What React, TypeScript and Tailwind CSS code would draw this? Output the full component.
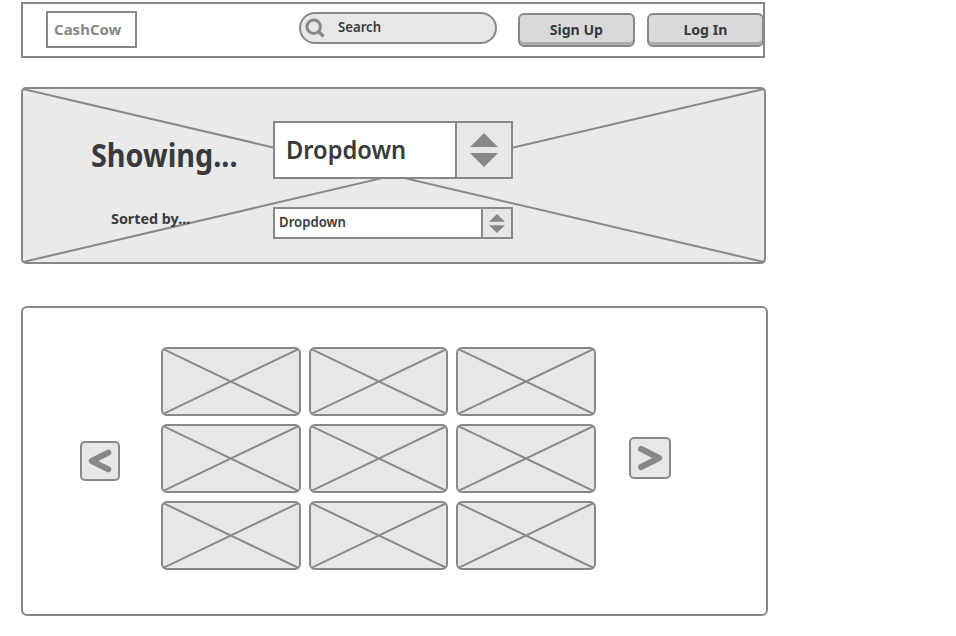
import React from "react";

function Cross() {
  return (
    <svg
      className="absolute inset-0 h-full w-full"
      preserveAspectRatio="none"
      viewBox="0 0 100 100"
      stroke="#888888"
      strokeWidth="2"
      aria-hidden="true"
    >
      <path d="M0 0L100 100M0 100L100 0" vectorEffect="non-scaling-stroke" />
    </svg>
  );
}

function Tile() {
  return (
    <div className="relative h-[69px] rounded-[6px] border-2 border-[#888888] bg-[#e7e7e7]">
      <Cross />
    </div>
  );
}

function HeaderButton({ children }: { children: React.ReactNode }) {
  return (
    <button className="h-[34px] w-[117px] shrink-0 rounded-[6px] border-2 border-[#888888] bg-[#d9d9d9] pr-px pb-[2px] text-[15px] leading-[28px] font-bold text-[#3a3a3a] shadow-[inset_0_-3px_0_#adadad]">
      <span className="inline-block scale-x-[0.94]">{children}</span>
    </button>
  );
}

function Arrows({ className }: { className: string }) {
  return (
    <svg className={className} viewBox="0 0 28 34" preserveAspectRatio="none" fill="#888888" aria-hidden="true">
      <path d="M14 0L28 14H0ZM14 34L0 20H28Z" />
    </svg>
  );
}

function PageButton({ direction }: { direction: "previous" | "next" }) {
  const previous = direction === "previous";
  return (
    <button
      aria-label={direction}
      className={
        previous
          ? "ml-[57px] mt-[133px] size-10 rounded-[5px] border-2 border-[#888888] bg-[#e7e7e7]"
          : "ml-[33px] mt-[129px] size-[42px] rounded-[5px] border-2 border-[#888888] bg-[#e7e7e7]"
      }
    >
      <svg
        className="h-full w-full"
        viewBox={previous ? "0 0 36 36" : "0 0 38 38"}
        fill="none"
        stroke="#888888"
        strokeWidth={previous ? 6 : 6.2}
        strokeLinecap="round"
        strokeLinejoin="round"
      >
        <path d={previous ? "M26.3 9.6L9.7 18L26.3 26.4" : "M10.2 10L28 19L10.2 28"} />
      </svg>
    </button>
  );
}

export default function App() {
  return (
    <main className="h-[636px] w-[956px] overflow-hidden bg-white pt-0.5 pl-[21px] font-['Noto_Sans','Open_Sans',sans-serif] text-[#3a3a3a]">
      <header className="flex h-14 w-[744px] border-2 border-[#888888]">
        <div className="mt-[7px] ml-[23px] h-[37px] w-[91px] border-2 border-[#888888] pl-[6px] text-[15px] leading-[32px] font-bold text-[#888888]">
          <span className="inline-block origin-left">CashCow</span>
        </div>
        <div className="mt-2 ml-[162px] flex h-8 w-[198px] rounded-full border-2 border-[#888888] bg-[#e7e7e7]">
          <svg className="mt-1 ml-1 size-[21px]" viewBox="0 0 21 21" fill="none" stroke="#888888" aria-hidden="true">
            <circle cx="8.7" cy="8.7" r="6.7" strokeWidth="3" />
            <path d="M13.5 13.5L18.6 18.4" strokeWidth="3.5" />
          </svg>
          <span className="ml-3 origin-left scale-x-[0.94] text-[14px] leading-[26px] font-semibold">Search</span>
        </div>
        <div className="mt-[9px] ml-[21px] flex w-[234px] shrink-0 gap-3">
          <HeaderButton>Sign Up</HeaderButton>
          <HeaderButton>Log In</HeaderButton>
        </div>
      </header>

      <section className="relative mt-[29px] h-[177px] w-[745px] rounded-[5px] border-2 border-[#888888] bg-[#eaeaea]">
        <Cross />
        <div className="relative flex h-[90px] pt-8">
          <h1 className="w-[250px] pl-[68px] text-[32px] leading-[67px] font-bold whitespace-nowrap">
            <span className="inline-block origin-left scale-x-[0.9]">Showing...</span>
          </h1>
          <div className="flex h-[58px] w-60 border-2 border-[#888888] bg-white">
            <span className="w-[180px] pl-[11px] text-[26px] leading-[53px] font-semibold">
              <span className="inline-block origin-left scale-x-[0.91]">Dropdown</span>
            </span>
            <span className="flex flex-1 items-center justify-center border-l-2 border-[#888888] bg-[#e7e7e7]">
              <Arrows className="h-[34px] w-7" />
            </span>
          </div>
        </div>
        <div className="relative flex pt-7">
          <h2 className="w-[250px] pl-[88px] text-[15px] leading-[23px] font-bold whitespace-nowrap">
            <span className="inline-block origin-left scale-x-[0.955]">Sorted by...</span>
          </h2>
          <div className="flex h-8 w-60 border-2 border-[#888888] bg-white">
            <span className="w-[206px] pl-1 text-[14px] leading-[26px] font-semibold">
              <span className="inline-block origin-left scale-x-[0.94]">Dropdown</span>
            </span>
            <span className="flex flex-1 items-center justify-center border-l-2 border-[#888888] bg-[#e7e7e7]">
              <Arrows className="h-[19px] w-4" />
            </span>
          </div>
        </div>
      </section>

      <section className="mt-[42px] flex h-[310px] w-[747px] items-start rounded-[6px] border-2 border-[#888888]">
        <PageButton direction="previous" />
        <div className="mt-[39px] ml-[41px] grid w-[435px] grid-cols-3 gap-2">
          {Array.from({ length: 9 }, (_, index) => (
            <Tile key={index} />
          ))}
        </div>
        <PageButton direction="next" />
      </section>
    </main>
  );
}
